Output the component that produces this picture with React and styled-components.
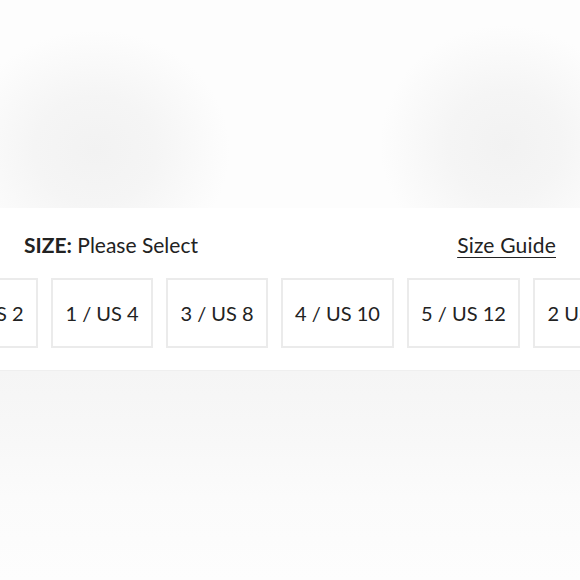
import React from 'react';
import styled, { createGlobalStyle } from "styled-components";

const Global = createGlobalStyle`
    html, body {
        margin: 0;
        padding: 0;
        background: #fdfdfd;
    }
    body {
        font-family: Lato, "Noto Sans", "Liberation Sans", sans-serif;
        color: #222;
    }
`;

const S = {
    Page: styled.div`
        width: 580px;
        height: 580px;
        display: flex;
        flex-direction: column;
        overflow: hidden;
    `,
    Backdrop: styled.div`
        height: 208px;
        flex-shrink: 0;
        background:
            radial-gradient(ellipse 135px 120px at 95px 150px, #f2f2f2 0%, #f5f5f5 45%, rgba(253,253,253,0) 100%),
            radial-gradient(ellipse 125px 120px at 505px 145px, #f2f2f2 0%, #f5f5f5 45%, rgba(253,253,253,0) 100%),
            #fdfdfd;
    `,
    Panel: styled.div`
        background: #fff;
        padding: 22px 0 22px;
        display: flex;
        flex-direction: column;
        gap: 20px;
    `,
    Header: styled.div`
        display: flex;
        justify-content: space-between;
        align-items: center;
        padding: 0 24px;
        height: 28px;
        font-size: 21px;
    `,
    Label: styled.div`
        & b {
            font-weight: 700;
        }
    `,
    Guide: styled.a`
        color: #222;
        letter-spacing: 0.2px;
        text-decoration: underline;
        text-underline-offset: 4px;
        text-decoration-thickness: 1px;
    `,
    Row: styled.div`
        display: flex;
        gap: 13px;
        margin-left: -64px;
    `,
    Size: styled.div`
        flex-shrink: 0;
        width: ${props => props.w}px;
        height: 70px;
        box-sizing: border-box;
        border: 2px solid #ebebeb;
        display: flex;
        align-items: center;
        justify-content: center;
        font-size: 20px;
        white-space: nowrap;
    `,
    Bottom: styled.div`
        flex: 1;
        background: linear-gradient(#f5f5f5 0%, #f8f8f8 35%, #fbfbfb 60%, #fdfdfd 100%);
        border-top: 1px solid #efefef;
    `
};

const sizes = [
    { label: "0 / US 2", w: 102 },
    { label: "1 / US 4", w: 102 },
    { label: "3 / US 8", w: 102 },
    { label: "4 / US 10", w: 113 },
    { label: "5 / US 12", w: 113 },
    { label: "2 US 6", w: 88 },
];

export default function App() {
    return (
        <S.Page>
            <Global />
            <S.Backdrop />
            <S.Panel>
                <S.Header>
                    <S.Label><b>SIZE:</b> Please Select</S.Label>
                    <S.Guide>Size Guide</S.Guide>
                </S.Header>
                <S.Row>
                    {sizes.map((item, index) => (
                        <S.Size key={index} w={item.w}>{item.label}</S.Size>
                    ))}
                </S.Row>
            </S.Panel>
            <S.Bottom />
        </S.Page>
    );
}
